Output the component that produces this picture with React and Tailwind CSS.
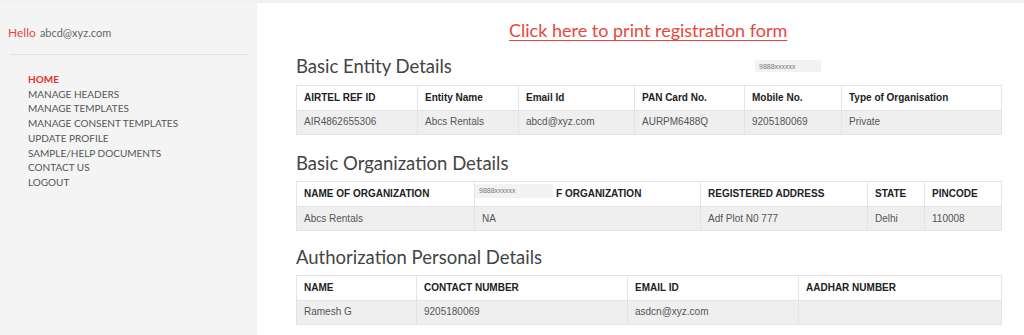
import React from 'react';

const navItems = [
    'MANAGE HEADERS',
    'MANAGE TEMPLATES',
    'MANAGE CONSENT TEMPLATES',
    'UPDATE PROFILE',
    'SAMPLE/HELP DOCUMENTS',
    'CONTACT US',
    'LOGOUT',
];

const arial = { fontFamily: '"Liberation Sans", Arial, sans-serif' };
const lato = { fontFamily: 'Lato, "Open Sans", sans-serif' };

function Mask({ className }) {
    return (
        <div className={`bg-[#f2f2f2] text-[7px] leading-none font-normal text-[#777] pl-[4px] pt-[3px] ${className}`} style={arial}>
            9888xxxxxx
        </div>
    );
}

function DetailsTable({ cols, row }) {
    return (
        <table className="w-[705px] border-collapse table-fixed text-[10px] leading-none" style={arial}>
            <thead>
                <tr className="bg-white">
                    {cols.map(([label, w]) => (
                        <th key={w} className={`${w} h-[25px] border border-[#e4e4e4] pl-[7px] text-left font-bold text-[#222]`}>
                            {label}
                        </th>
                    ))}
                </tr>
            </thead>
            <tbody>
                <tr className="bg-[#efefef]">
                    {row.map((v, i) => (
                        <td key={i} className="h-[24px] border border-[#e4e4e4] pl-[7px] text-[#555]">{v}</td>
                    ))}
                </tr>
            </tbody>
        </table>
    );
}

function Heading({ children }) {
    return (
        <h2 className="text-[18.5px] leading-none text-[#444] font-normal" style={lato}>
            {children}
        </h2>
    );
}

// masked header cell in the organization table
const maskedType = (
    <div className="flex items-center -ml-[7px] h-[23px]">
        <Mask className="w-[78px] h-[14px] self-start mt-[1px]" />
        <span className="pl-[3px]">F ORGANIZATION</span>
    </div>
);

export default function App() {
    return (
        <div className="w-[1024px] h-[335px] overflow-hidden bg-[#f1f1f1] pt-[3px] flex">
            {/* Sidebar */}
            <aside className="w-[257px] bg-[#f4f4f4] pt-[20px]" style={lato}>
                <div className="pl-[8px] leading-none">
                    <span className="text-[12px] text-[#e8473d]">Hello</span>{' '}
                    <span className="text-[11px] text-[#666]">abcd@xyz.com</span>
                </div>
                <div className="ml-[10px] mr-[10px] mt-[15px] border-t border-[#e2e2e2]" />
                <nav className="mt-[17px] pl-[28px] text-[10px] leading-[14.7px] text-[#555]">
                    <div className="font-bold text-[#e8302a]">HOME</div>
                    {navItems.map(item => (
                        <div key={item}>{item}</div>
                    ))}
                </nav>
            </aside>

            {/* Main */}
            <main className="flex-1 bg-white pl-[39px]">
                <div className="relative">
                    <div className="pt-[16px] pl-[213px]">
                        <a href="#" className="text-[18px] leading-none text-[#e8473d] underline underline-offset-[3px] decoration-1" style={lato}>
                            Click here to print registration form
                        </a>
                    </div>
                    <div className="mt-[14px]">
                        <Heading>Basic Entity Details</Heading>
                    </div>
                    <Mask className="absolute left-[459px] top-[57px] w-[66px] h-[12px]" />
                    <div className="mt-[9px]">
                        <DetailsTable
                            cols={[
                                ['AIRTEL REF ID', 'w-[121px]'],
                                ['Entity Name', 'w-[101px]'],
                                ['Email Id', 'w-[116px]'],
                                ['PAN Card No.', 'w-[110px]'],
                                ['Mobile No.', 'w-[97px]'],
                                ['Type of Organisation', 'w-[160px]'],
                            ]}
                            row={['AIR4862655306', 'Abcs Rentals', 'abcd@xyz.com', 'AURPM6488Q', '9205180069', 'Private']}
                        />
                    </div>
                </div>

                <div className="mt-[19px]">
                    <Heading>Basic Organization Details</Heading>
                    <div className="mt-[9px]">
                        <DetailsTable
                            cols={[
                                ['NAME OF ORGANIZATION', 'w-[178px]'],
                                [maskedType, 'w-[226px]'],
                                ['REGISTERED ADDRESS', 'w-[167px]'],
                                ['STATE', 'w-[57px]'],
                                ['PINCODE', 'w-[77px]'],
                            ]}
                            row={['Abcs Rentals', 'NA', 'Adf Plot N0 777', 'Delhi', '110008']}
                        />
                    </div>
                </div>

                <div className="mt-[17px]">
                    <Heading>Authorization Personal Details</Heading>
                    <div className="mt-[8px]">
                        <DetailsTable
                            cols={[
                                ['NAME', 'w-[120px]'],
                                ['CONTACT NUMBER', 'w-[211px]'],
                                ['EMAIL ID', 'w-[171px]'],
                                ['AADHAR NUMBER', 'w-[203px]'],
                            ]}
                            row={['Ramesh G', '9205180069', 'asdcn@xyz.com', '']}
                        />
                    </div>
                </div>
            </main>
        </div>
    );
}
